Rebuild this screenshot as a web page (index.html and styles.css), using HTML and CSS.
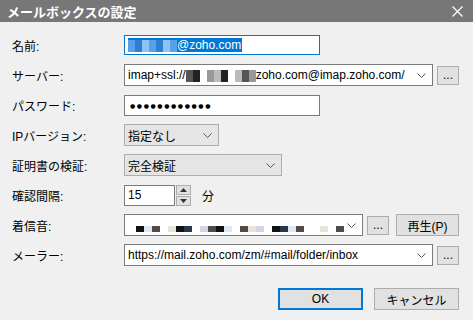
FILE: index.html
```html
<!DOCTYPE html>
<html lang="ja">
<head>
  <meta charset="UTF-8">
  <title>メールボックスの設定</title>
  <link rel="stylesheet" href="styles.css">
</head>
<body>
  <div class="dialog">
    <div class="titlebar">
      <span class="title">メールボックスの設定</span>
      <svg class="close" width="11" height="11" viewBox="0 0 11 11"><path d="M0.5 0.5 L10.5 10.5 M10.5 0.5 L0.5 10.5" stroke="#fff" stroke-width="1.2"/></svg>
    </div>

    <div class="form">
      <div class="row">
        <label>名前:</label>
        <div class="field text focus w196">
          <span class="sel"><span class="mosaic"><i class="b1"></i><i class="b2"></i><i class="b3"></i><i class="b1"></i><i class="b2"></i><i class="b3"></i><i class="b1"></i></span>@zoho.com</span>
        </div>
      </div>

      <div class="row">
        <label>サーバー:</label>
        <div class="field combo w309">
          <span class="val">imap+ssl://<span class="mosaic"><i class="g1"></i><i class="g2"></i><i class="w"></i><i class="g3"></i><i class="g4"></i><i class="g2"></i><i class="w"></i><i class="g4"></i><i class="g1"></i><i class="g3"></i></span>zoho.com@imap.zoho.com/</span>
          <svg class="chev" width="9" height="5" viewBox="0 0 9 5"><path d="M0.5 0.5 L4.5 4.5 L8.5 0.5" fill="none" stroke="#555" stroke-width="1"/></svg>
        </div>
        <button class="btn dots">...</button>
      </div>

      <div class="row">
        <label>パスワード:</label>
        <div class="field text w196">
          <span class="val pw">●●●●●●●●●●●●</span>
        </div>
      </div>

      <div class="row">
        <label>IPバージョン:</label>
        <div class="field list w95">
          <span class="val">指定なし</span>
          <svg class="chev" width="9" height="5" viewBox="0 0 9 5"><path d="M0.5 0.5 L4.5 4.5 L8.5 0.5" fill="none" stroke="#555" stroke-width="1"/></svg>
        </div>
      </div>

      <div class="row">
        <label>証明書の検証:</label>
        <div class="field list w158">
          <span class="val">完全検証</span>
          <svg class="chev" width="9" height="5" viewBox="0 0 9 5"><path d="M0.5 0.5 L4.5 4.5 L8.5 0.5" fill="none" stroke="#555" stroke-width="1"/></svg>
        </div>
      </div>

      <div class="row">
        <label>確認間隔:</label>
        <div class="field text w51"><span class="val">15</span></div>
        <div class="spin">
          <span class="up"><svg width="7" height="4" viewBox="0 0 7 4"><path d="M0 4 L3.5 0 L7 4 Z" fill="#333"/></svg></span>
          <span class="down"><svg width="7" height="4" viewBox="0 0 7 4"><path d="M0 0 L3.5 4 L7 0 Z" fill="#333"/></svg></span>
        </div>
        <span class="unit">分</span>
      </div>

      <div class="row">
        <label>着信音:</label>
        <div class="field combo w239">
          <span class="val"><span class="mosaic wide"><i class="w"></i><i class="k"></i><i class="l1"></i><i class="k2"></i><i class="w"></i><i class="l2"></i><i class="k"></i><i class="n"></i><i class="w"></i><i class="l3"></i><i class="k2"></i><i class="k"></i><i class="l1"></i><i class="w"></i><i class="k2"></i><i class="l2"></i><i class="l3"></i><i class="w"></i><i class="k"></i><i class="n"></i><i class="l1"></i><i class="k2"></i><i class="w"></i><i class="w"></i><i class="l2"></i><i class="w"></i><i class="k2"></i></span></span>
          <svg class="chev" width="9" height="5" viewBox="0 0 9 5"><path d="M0.5 0.5 L4.5 4.5 L8.5 0.5" fill="none" stroke="#555" stroke-width="1"/></svg>
        </div>
        <button class="btn dots">...</button>
        <button class="btn play">再生(P)</button>
      </div>

      <div class="row">
        <label>メーラー:</label>
        <div class="field combo w309">
          <span class="val">https://mail.zoho.com/zm/#mail/folder/inbox</span>
          <svg class="chev" width="9" height="5" viewBox="0 0 9 5"><path d="M0.5 0.5 L4.5 4.5 L8.5 0.5" fill="none" stroke="#555" stroke-width="1"/></svg>
        </div>
        <button class="btn dots">...</button>
      </div>
    </div>

    <div class="actions">
      <button class="btn act default">OK</button>
      <button class="btn act">キャンセル</button>
    </div>
  </div>
</body>
</html>
```

FILE: styles.css
```css
body {
  margin: 0;
  background: #f0f0f0;
  font-family: "Liberation Sans", "Noto Sans CJK JP", sans-serif;
  font-size: 12px;
  color: #000;
}
.dialog {
  width: 473px;
  height: 320px;
  overflow: hidden;
}
.titlebar {
  height: 22px;
  background: #777;
  color: #fff;
  display: flex;
  align-items: center;
  justify-content: space-between;
  padding: 0 10px 0 7px;
}
.title {
  font-size: 13px;
  font-weight: bold;
}
.form {
  padding: 8px 0 0 12px;
}
.row {
  height: 30px;
  display: flex;
  align-items: center;
}
.row label {
  width: 112px;
  flex: none;
}
.field {
  box-sizing: border-box;
  height: 22px;
  border: 1px solid #7a7a7a;
  background: #fff;
  display: flex;
  align-items: center;
  padding: 0 0 0 3px;
  white-space: nowrap;
  overflow: hidden;
}
.field.text { height: 21px; }
.field.focus { border-color: #0078d7; height: 20px; }
.field.list {
  background: #e5e5e5;
  border-color: #adadad;
}
.field .val { flex: 1; overflow: hidden; }
.chev { flex: none; margin: 0 6px 0 3px; }
.w196 { width: 196px; }
.w309 { width: 309px; }
.w95 { width: 95px; }
.w158 { width: 158px; }
.w51 { width: 51px; }
.w239 { width: 239px; }

.sel {
  background: #0078d7;
  color: #fff;
  padding-right: 1px;
}
.pw {
  font-family: "DejaVu Sans", sans-serif;
  font-size: 6px;
  letter-spacing: 1.6px;
  padding-left: 2px;
}

.mosaic { display: inline-flex; vertical-align: middle; height: 12px; }
.mosaic i { width: 7px; height: 12px; display: block; }
.mosaic.wide i { width: 8px; height: 6px; margin-top: 6px; }
.b1 { background: #5aa0e8; }
.b2 { background: #2e7fd4; }
.b3 { background: #8fc3f4; }
.g1 { background: #555; }
.g2 { background: #222; }
.g3 { background: #999; }
.g4 { background: #bbb; }
.w { background: #fff; }
.k { background: #111; }
.k2 { background: #514a48; }
.l1 { background: #dfe8f5; }
.l2 { background: #e8e2d9; }
.l3 { background: #cfd5e3; }
.n { background: #2a3550; }

.spin {
  display: flex;
  flex-direction: column;
  margin-left: 1px;
  gap: 1px;
}
.spin span {
  box-sizing: border-box;
  width: 15px;
  height: 10px;
  background: #e1e1e1;
  border: 1px solid #adadad;
  display: flex;
  align-items: center;
  justify-content: center;
}
.unit { margin-left: 11px; }

.btn {
  box-sizing: border-box;
  font: inherit;
  background: #e1e1e1;
  border: 1px solid #adadad;
  color: #000;
  padding: 0;
  display: flex;
  align-items: center;
  justify-content: center;
}
.dots {
  width: 22px;
  height: 19px;
  margin-left: 4px;
  line-height: 1;
}
.play {
  width: 63px;
  height: 22px;
  margin-left: 7px;
}
.actions {
  display: flex;
  justify-content: flex-end;
  gap: 11px;
  padding: 18px 14px 0 0;
}
.act {
  width: 85px;
  height: 22px;
}
.default {
  border: 2px solid #0078d7;
}
```
